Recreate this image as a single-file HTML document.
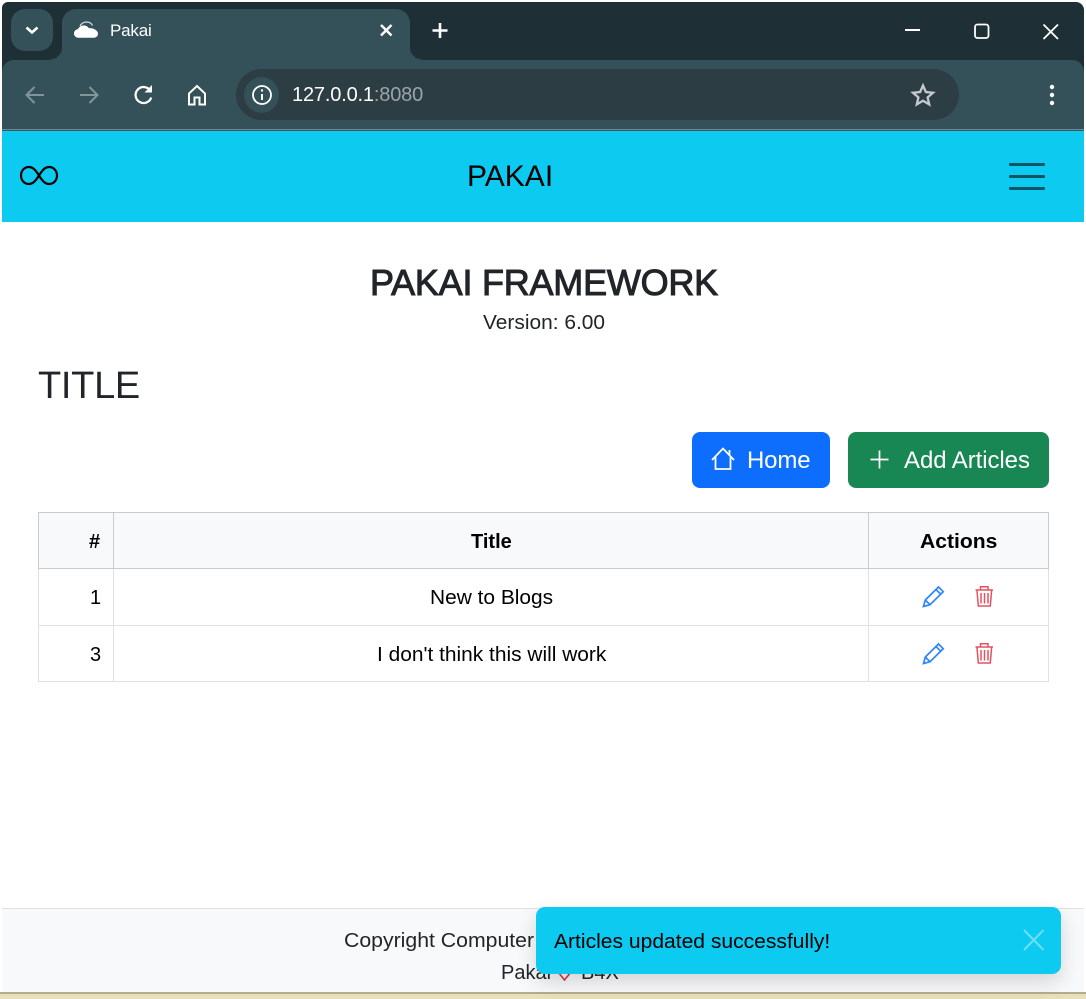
<!DOCTYPE html>
<html><head><meta charset="utf-8"><style>
html,body{margin:0;padding:0;background:#fff}
body{width:1086px;height:999px;position:relative;overflow:hidden;font-family:"Liberation Sans",sans-serif}
.a{position:absolute;white-space:nowrap;transform-origin:0 50%}
svg{position:absolute;overflow:visible}
.td{position:absolute;font-size:20px;line-height:24px;color:#000;white-space:nowrap;transform-origin:0 50%}
.w{transform:scaleX(1.045)}
</style></head><body>
<!-- browser chrome -->
<div class="a" style="left:2px;top:2px;width:1082px;height:129px;background:#1f2f36;border-radius:6px 8px 0 0"></div>
<div class="a" style="left:2px;top:60px;width:1082px;height:69px;background:#345059;border-radius:12px 12px 0 0"></div>
<div class="a" style="left:2px;top:129px;width:1082px;height:2px;background:linear-gradient(#74868d 50%,#3d5761 50%)"></div>
<div class="a" style="left:11px;top:9px;width:42px;height:42px;background:#345059;border-radius:14px"></div>
<svg style="left:0;top:0" width="100" height="60"><path d="M26.500 27.500l5.500 5 5.500-5" fill="none" stroke="#fff" stroke-width="2.600"/></svg>
<div class="a" style="left:62px;top:9px;width:348px;height:52px;background:#345059;border-radius:14px 14px 0 0"></div>
<div class="a" style="left:50px;top:47px;width:12px;height:13px;background:radial-gradient(circle at 0 0,#1f2f36 12px,#345059 12.500px)"></div>
<div class="a" style="left:410px;top:47px;width:12px;height:13px;background:radial-gradient(circle at 100% 0,#1f2f36 12px,#345059 12.500px)"></div>
<svg style="left:0;top:0" width="110" height="50"><path d="M79 37.800c-3 0-5-1.800-5-4.300 0-2.400 1.800-4.100 4-4.400 1-2.300 3.200-3.600 5.800-3.600 2.300 0 4.100 1 5.100 2.700 4.500-.3 9.100 2.300 9.100 5.500 0 2.500-2 4.100-5 4.100z" fill="#fff"/><path d="M80 26c1.500-2.700 4-4 6.500-4 2.500 0 5 1.200 6 3.500" fill="none" stroke="#cfd8ea" stroke-width="1.300"/></svg>
<div class="a" style="left:110px;top:21px;font-size:17px;line-height:20px;color:#fff;letter-spacing:-.2px">Pakai</div>
<svg style="left:0;top:0" width="460" height="50"><path d="M381 25l10.500 10.500M391.500 25L381 35.500" stroke="#fff" stroke-width="2.400" fill="none"/><path d="M440 23v15M432.500 30.500h15" stroke="#fff" stroke-width="2.600" fill="none"/></svg>
<svg style="left:0;top:0" width="1086" height="50"><path d="M905 30h15" stroke="#fff" stroke-width="2"/><rect x="975" y="24.500" width="13.500" height="13.500" rx="2.500" fill="none" stroke="#fff" stroke-width="1.800"/><path d="M1043.500 24.500l14.500 14.500M1058 24.500l-14.500 14.500" stroke="#fff" stroke-width="1.800"/></svg>
<svg style="left:0;top:60px" width="300" height="70">
<path d="M44 35H27M34.500 27l-8 8 8 8" fill="none" stroke="#84949b" stroke-width="2"/>
<path d="M80 35h17M89.500 27l8 8-8 8" fill="none" stroke="#84949b" stroke-width="2"/>
<path d="M150.500 31a8 8 0 1 0 .7 6.500" fill="none" stroke="#fff" stroke-width="2.200"/><path d="M144.500 32.500h7.500V25z" fill="#fff"/>
<path d="M189 44.500V33.500l8-7.500 8 7.500v11h-5.500v-7h-5v7z" fill="none" stroke="#fff" stroke-width="2"/>
</svg>
<div class="a" style="left:236px;top:69px;width:723px;height:51px;background:#2c3d44;border-radius:26px"></div>
<div class="a" style="left:244px;top:77px;width:35px;height:36px;background:#345059;border-radius:50%"></div>
<svg style="left:0;top:60px" width="300" height="70"><circle cx="262" cy="35" r="9" fill="none" stroke="#fff" stroke-width="1.800"/><path d="M262 34v6" stroke="#fff" stroke-width="2"/><circle cx="262" cy="30.500" r="1.200" fill="#fff"/></svg>
<div class="a" style="left:292px;top:83px;font-size:20px;line-height:24px;color:#fff;letter-spacing:-.17px">127.0.0.1<span style="color:#9aa5aa">:8080</span></div>
<svg style="left:0;top:60px" width="1086" height="70"><path d="M923 25.500l2.900 6.500 7.100.7-5.400 4.700 1.600 7-6.200-3.700-6.200 3.700 1.600-7-5.400-4.700 7.100-.7z" fill="none" stroke="#c4cacd" stroke-width="2.300"/><circle cx="1052" cy="27" r="2.200" fill="#fff"/><circle cx="1052" cy="35" r="2.200" fill="#fff"/><circle cx="1052" cy="43" r="2.200" fill="#fff"/></svg>
<!-- navbar -->
<div class="a" style="left:2px;top:131px;width:1082px;height:91px;background:#0dcaf0"></div>
<svg style="left:0;top:131px" width="70" height="91"><path d="M39 44.500C35.500 39 33 36 28.800 36 24.300 36 21 39.800 21 44.500S24.300 53 28.800 53c4.200 0 6.700-3 10.200-8.500S45 36 49.200 36c4.500 0 7.800 3.800 7.800 8.500S53.700 53 49.200 53c-4.200 0-6.700-3-10.200-8.500z" fill="none" stroke="#000" stroke-width="2.200"/></svg>
<div class="a" style="left:467px;top:159px;font-size:30px;line-height:36px;color:#000">PAKAI</div>
<div class="a" style="left:1009px;top:163px;width:36px;height:2.500px;background:#0b5567;border-radius:1px"></div>
<div class="a" style="left:1009px;top:175px;width:36px;height:2.500px;background:#0b5567;border-radius:1px"></div>
<div class="a" style="left:1009px;top:187px;width:36px;height:2.500px;background:#0b5567;border-radius:1px"></div>
<!-- heading -->
<div class="a" id="h" style="left:370px;top:261px;font-size:36px;line-height:44px;color:#212529;-webkit-text-stroke:1px #212529;letter-spacing:-.23px">PAKAI FRAMEWORK</div>
<div class="a w" style="left:483px;top:311px;font-size:20px;line-height:24px;color:#212529">Version: 6.00</div>
<div class="a" style="left:38px;top:363px;font-size:38px;line-height:46px;color:#212529;letter-spacing:-.3px">TITLE</div>
<!-- buttons -->
<div class="a" style="left:692px;top:432px;width:138px;height:56px;background:#0d6efd;border-radius:8px"></div>
<svg style="left:692px;top:432px" width="138" height="56"><path d="M20 28l11-11.500L42 28M23.500 25V37h15V25M37.500 18v5" fill="none" stroke="#fff" stroke-width="1.800"/></svg>
<div class="a" style="left:747px;top:447px;font-size:24px;line-height:28px;color:#fff;letter-spacing:-.15px">Home</div>
<div class="a" style="left:848px;top:432px;width:201px;height:56px;background:#198754;border-radius:8px"></div>
<svg style="left:848px;top:432px" width="201" height="56"><path d="M31.500 18.500v18M22.500 27.500h18" stroke="#fff" stroke-width="1.700" fill="none"/></svg>
<div class="a" style="left:904px;top:447px;font-size:24px;line-height:28px;color:#fff;letter-spacing:-.07px">Add Articles</div>
<!-- table -->
<div class="a" style="left:38px;top:512px;width:1011px;height:57px;background:#f8f9fa"></div>
<div class="a" style="left:38px;top:512px;width:1011px;height:1px;background:#c9cbcd"></div>
<div class="a" style="left:38px;top:568px;width:1011px;height:1px;background:#c9cbcd"></div>
<div class="a" style="left:38px;top:625px;width:1011px;height:1px;background:#dee2e6"></div>
<div class="a" style="left:38px;top:681px;width:1011px;height:1px;background:#dee2e6"></div>
<div class="a" style="left:38px;top:512px;width:1px;height:57px;background:#c9cbcd"></div>
<div class="a" style="left:113px;top:512px;width:1px;height:57px;background:#c9cbcd"></div>
<div class="a" style="left:868px;top:512px;width:1px;height:57px;background:#c9cbcd"></div>
<div class="a" style="left:1048px;top:512px;width:1px;height:57px;background:#c9cbcd"></div>
<div class="a" style="left:38px;top:569px;width:1px;height:113px;background:#dee2e6"></div>
<div class="a" style="left:113px;top:569px;width:1px;height:113px;background:#dee2e6"></div>
<div class="a" style="left:868px;top:569px;width:1px;height:113px;background:#dee2e6"></div>
<div class="a" style="left:1048px;top:569px;width:1px;height:113px;background:#dee2e6"></div>
<div class="td" style="left:89px;top:530px;font-weight:bold">#</div>
<div class="td" style="left:471px;top:530px;font-weight:bold">Title</div>
<div class="td" style="left:920px;top:530px;font-weight:bold;transform:scaleX(1.055)">Actions</div>
<div class="td" style="left:90px;top:586px">1</div>
<div class="td w" style="left:430px;top:586px">New to Blogs</div>
<div class="td" style="left:90px;top:643px">3</div>
<div class="td w" style="left:377px;top:643px">I don't think this will work</div>
<svg style="left:0;top:0" width="1086" height="700">
<g>
<path d="M923.500 606.500l1.800-6.500 13.200-13 4.700 4.700-13.200 13zM925.300 600l4.700 4.700M936 589.500l4.700 4.700" fill="none" stroke="#0d6efd" stroke-width="1.700" opacity=".85"/>
<path d="M975.500 590h17.500M980.500 589.500v-2.800h7.500v2.800M977 590.500l1.300 15.500h12l1.300-15.500M981 593v10.500M984.500 593v10.500M988 593v10.500" fill="none" stroke="#dc3545" stroke-width="1.500" opacity=".85"/>
</g>
<g transform="translate(0,57)">
<path d="M923.500 606.500l1.800-6.500 13.200-13 4.700 4.700-13.200 13zM925.300 600l4.700 4.700M936 589.500l4.700 4.700" fill="none" stroke="#0d6efd" stroke-width="1.700" opacity=".85"/>
<path d="M975.500 590h17.500M980.500 589.500v-2.800h7.500v2.800M977 590.500l1.300 15.500h12l1.300-15.500M981 593v10.500M984.500 593v10.500M988 593v10.500" fill="none" stroke="#dc3545" stroke-width="1.500" opacity=".85"/>
</g>
</svg>
<!-- footer -->
<div class="a" style="left:2px;top:908px;width:1082px;height:84px;background:#f8f9fa;border-top:1px solid #dee2e6;box-sizing:border-box"></div>
<div class="a" style="left:0;top:992px;width:1086px;height:2px;background:#b3ad8e"></div>
<div class="a" style="left:0;top:994px;width:1086px;height:5px;background:#e8e0b8"></div>
<div class="a" style="left:344px;top:929px;font-size:20px;line-height:24px;color:#212529;transform:scaleX(1.062)">Copyright Computer</div>
<div class="a" style="left:501px;top:961px;font-size:20px;line-height:24px;color:#212529">Pakai</div>
<svg style="left:0;top:900px" width="620" height="99"><path d="M558 72l6.500 8 6.500-8" fill="none" stroke="#dc3545" stroke-width="1.600"/></svg>
<div class="a" style="left:581px;top:961px;font-size:20px;line-height:24px;color:#212529">B4X</div>
<!-- toast -->
<div class="a" style="left:536px;top:907px;width:525px;height:67px;background:#0dcaf0;border-radius:9px;box-shadow:0 8px 20px rgba(0,0,0,.15)"></div>
<div class="a" style="left:554px;top:930px;font-size:20px;line-height:24px;color:#000;transform:scaleX(1.053)">Articles updated successfully!</div>
<svg style="left:0;top:900px" width="1086" height="99"><path d="M1024 30l19.500 20M1043.500 30L1024 50" stroke="#6fdef5" stroke-width="2" fill="none"/></svg>
</body></html>
